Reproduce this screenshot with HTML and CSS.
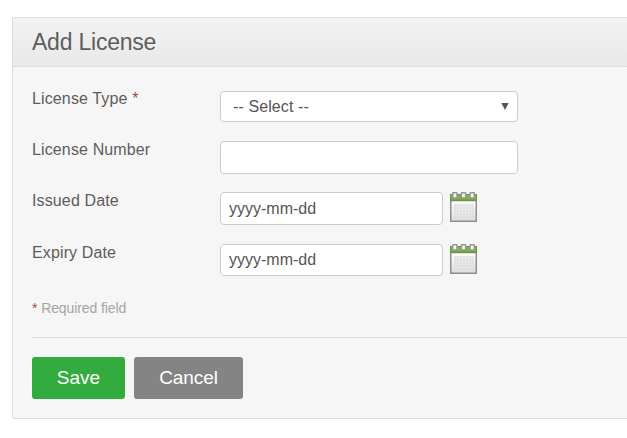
FILE: index.html
```
<!DOCTYPE html>
<html lang="en">
<head>
<meta charset="utf-8">
<title>Add License</title>
<link rel="stylesheet" href="styles.css">
</head>
<body>
<svg class="defs" width="0" height="0">
  <defs>
    <linearGradient id="page" x1="0" y1="0" x2="0" y2="1"><stop offset="0" stop-color="#fff"/><stop offset="1" stop-color="#dcdcdc"/></linearGradient>
    <pattern id="cells" x="4" y="12" width="3" height="3" patternUnits="userSpaceOnUse"><rect width="3" height="3" fill="#e6e6e6"/><rect width="2" height="2" fill="#dadada"/></pattern>
    <symbol id="calendar" viewBox="0 0 27 30">
      <rect x=".75" y="8.5" width="25.5" height="20.75" fill="url(#page)" stroke="#8e8e8e" stroke-width="1.5"/>
      <rect x="4" y="12" width="20" height="14" fill="url(#cells)" opacity=".75"/>
      <rect x="0" y="2" width="27" height="7" fill="#649a35"/>
      <rect x="1" y="3" width="25" height="4.5" fill="#7db642"/>
      <g fill="#fafafa" stroke="#96939a" stroke-width="1.5"><rect x="2.75" y=".75" width="4.25" height="5.25" rx=".5"/><rect x="11.4" y=".75" width="4.25" height="5.25" rx=".5"/><rect x="20" y=".75" width="4.25" height="5.25" rx=".5"/></g>
    </symbol>
  </defs>
</svg>
<section class="panel">
  <header class="panel-head"><h1>Add License</h1></header>
  <form class="panel-body">
    <div class="row row-type">
      <label for="type">License Type <em>*</em></label>
      <div class="select">
        <select id="type"><option>-- Select --</option></select>
        <svg class="arrow" width="8" height="7" viewBox="0 0 8 7"><path d="M.3 0H7.7L4 7Z" fill="#555"/></svg>
      </div>
    </div>
    <div class="row row-number">
      <label for="number">License Number</label>
      <input id="number" type="text">
    </div>
    <div class="row row-issued">
      <label for="issued">Issued Date</label>
      <input id="issued" class="date" type="text" value="yyyy-mm-dd">
      <svg class="cal" width="27" height="30"><use href="#calendar"/></svg>
    </div>
    <div class="row row-expiry">
      <label for="expiry">Expiry Date</label>
      <input id="expiry" class="date" type="text" value="yyyy-mm-dd">
      <svg class="cal" width="27" height="30"><use href="#calendar"/></svg>
    </div>
    <p class="required"><em>*</em> Required field</p>
    <div class="actions">
      <button type="button" class="save">Save</button>
      <button type="button" class="cancel">Cancel</button>
    </div>
  </form>
</section>
</body>
</html>
```
FILE: styles.css
```
* { box-sizing: border-box; }
body {
  margin: 0;
  padding: 17px 0 0 12px;
  background: #fff;
  color: #5d5d5d;
  font-family: "Liberation Sans", Arial, sans-serif;
  font-size: 16px;
  overflow: hidden;
}
.defs { position: absolute; }
.panel {
  height: 402px;
  background: #f6f6f6;
  border: 1px solid #dedede;
  border-right: 0;
  border-radius: 3px 0 0 3px;
}
.panel-head {
  height: 49px;
  padding-left: 19px;
  background: linear-gradient(#f3f3f3, #e8e8e8);
  border-bottom: 1px solid #dedede;
}
h1 {
  margin: 0;
  font-size: 23px;
  font-weight: normal;
  line-height: 48px;
  letter-spacing: -.22px;
}
.panel-body { padding: 24px 0 0 19px; }
.row { display: flex; align-items: flex-start; }
.row-type { height: 50px; }
.row-number { height: 51px; }
.row-issued { height: 52px; }
.row-expiry { height: 56px; }
label { width: 188px; line-height: 17px; letter-spacing: .13px; }
.row-type label { line-height: 15px; }
em { color: #96503f; font-style: normal; }
input, select {
  width: 298px;
  height: 33px;
  margin: 0;
  padding: 0 8px;
  background: #fff;
  border: 1px solid #ccc;
  border-radius: 4px;
  color: #555;
  font: 16px "Liberation Sans", Arial, sans-serif;
}
.select { display: flex; align-items: center; }
select { height: 31px; padding-left: 12px; appearance: none; letter-spacing: .1px; }
.arrow { margin-left: -17px; }
.date { width: 223px; }
.row-expiry .date { height: 32px; }
.cal { margin-left: 7px; }
.required {
  margin: 0 0 21px;
  color: #a5a5a5;
  font-size: 14px;
  line-height: 16px;
  letter-spacing: -.1px;
}
.actions {
  display: flex;
  gap: 9px;
  padding-top: 19px;
  border-top: 1px solid #dedede;
}
button {
  height: 42px;
  padding: 0;
  border: 0;
  border-radius: 3px;
  color: #fff;
  font: 19px "Liberation Sans", Arial, sans-serif;
}
.save { width: 93px; background: #33ac3f; }
.cancel { width: 109px; background: #848484; letter-spacing: -.1px; }
```
